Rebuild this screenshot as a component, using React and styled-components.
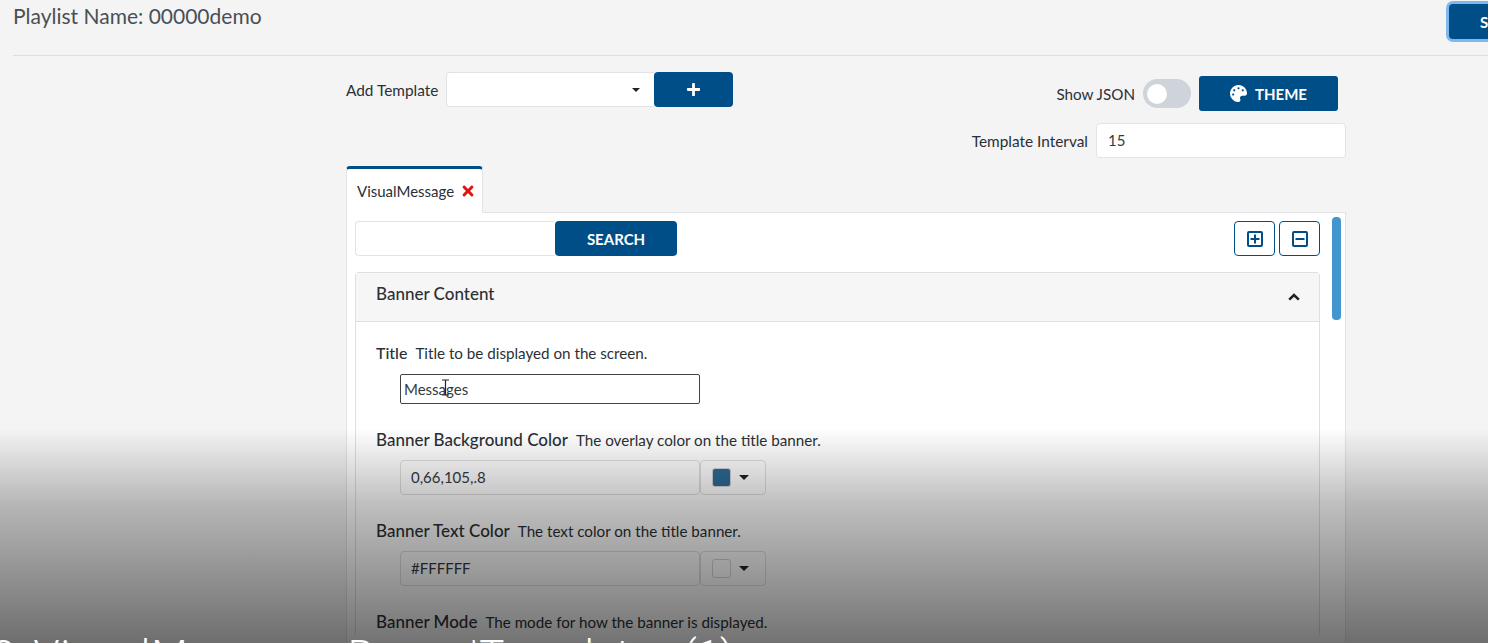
import styled, { createGlobalStyle } from "styled-components";
import { FaPalette, FaTimes, FaPlus } from "react-icons/fa";

const navy = "#004e87";

const GlobalStyle = createGlobalStyle`
  html, body {
    margin: 0;
    padding: 0;
    height: 100%;
    overflow: hidden;
    background: #f4f4f5;
  }
  body {
    font-family: "Lato", "Noto Sans", sans-serif;
    color: #212529;
  }
`;

const Page = styled.div`
  position: relative;
  width: 1488px;
  height: 643px;
  overflow: hidden;
  background: #f4f4f5;
`;

const TopBar = styled.div`
  display: flex;
  justify-content: space-between;
  align-items: flex-start;
  margin-left: 13px;
  height: 55px;
  border-bottom: 1px solid #dedede;
  box-sizing: content-box;
`;

const PlaylistName = styled.div`
  font-size: 21px;
  line-height: 24px;
  margin-top: 4px;
  color: #4a4f54;
`;

const SaveButton = styled.button`
  width: 60px;
  height: 35px;
  margin: 4px -21px 0 0;
  padding: 0 0 0 31px;
  text-align: left;
  border: none;
  border-radius: 4px;
  background: ${navy};
  color: #fff;
  font: 700 15px "Lato", sans-serif;
  box-shadow: 0 0 0 3px #7db8ee;
`;

const Content = styled.div`
  width: 1000px;
  margin-left: 346px;
`;

const ToolRow = styled.div`
  display: flex;
  justify-content: space-between;
  align-items: flex-start;
  padding-top: 16px;
  height: 51px;
  box-sizing: content-box;
`;

const Group = styled.div`
  display: flex;
  align-items: center;
`;

const Label = styled.span`
  font-size: ${(p) => p.$size || 15.4}px;
  color: #2b3035;
  margin-right: 8px;
`;

const SelectBox = styled.div`
  width: 193px;
  height: 33px;
  background: #fff;
  border: 1px solid #e1e3e6;
  border-right: none;
  border-radius: 4px 0 0 4px;
  display: flex;
  align-items: center;
  justify-content: flex-end;
  padding-right: 14px;
  box-sizing: content-box;
`;

const Caret = styled.span`
  width: 0;
  height: 0;
  border-left: ${(p) => p.$size || 4}px solid transparent;
  border-right: ${(p) => p.$size || 4}px solid transparent;
  border-top: ${(p) => p.$size || 4}px solid #222;
`;

const AddButton = styled.button`
  width: 79px;
  height: 35px;
  border: none;
  border-radius: 4px;
  background: ${navy};
  color: #fff;
  display: flex;
  align-items: center;
  justify-content: center;
  padding: 0;
`;

const RightTools = styled.div`
  display: flex;
  flex-direction: column;
  align-items: flex-end;
`;

const JsonRow = styled.div`
  display: flex;
  align-items: center;
  margin: 4px 8px 12px 0;
`;

const Toggle = styled.div`
  width: 48px;
  height: 29px;
  border-radius: 15px;
  background: #ced4da;
  display: flex;
  align-items: center;
  padding-left: 4px;
  box-sizing: border-box;
  margin-right: 8px;
  &::before {
    content: "";
    width: 20px;
    height: 20px;
    border-radius: 50%;
    background: #fff;
  }
`;

const ThemeButton = styled.button`
  width: 139px;
  height: 35px;
  border: none;
  border-radius: 3px;
  background: ${navy};
  color: #fff;
  font: 700 15px "Lato", sans-serif;
  display: flex;
  align-items: center;
  justify-content: center;
  gap: 8px;
  padding: 0;
`;

const IntervalRow = styled.div`
  display: flex;
  align-items: center;
`;

const IntervalInput = styled.div`
  width: 237px;
  height: 33px;
  padding-left: 11px;
  background: #fff;
  border: 1px solid #e1e3e6;
  border-radius: 4px;
  font-size: 15px;
  line-height: 33px;
  color: #343a40;
  box-sizing: content-box;
`;

const Tabs = styled.div`
  display: flex;
  margin-top: 43px;
`;

const Tab = styled.div`
  width: 137px;
  height: 47px;
  padding-left: 10px;
  background: #fff;
  border: 1px solid #e1e3e6;
  border-top: 3px solid ${navy};
  border-bottom: none;
  border-radius: 4px 4px 0 0;
  display: flex;
  align-items: center;
  gap: 6px;
  font-size: 15px;
  color: #2b3035;
  box-sizing: border-box;
  margin-bottom: -1px;
  position: relative;
  z-index: 1;
`;

const Panel = styled.div`
  position: relative;
  height: 460px;
  background: #fff;
  border: 1px solid #e1e3e6;
  padding: 8px 25px 0 8px;
  box-sizing: border-box;
`;

const ScrollThumb = styled.div`
  position: absolute;
  top: 4px;
  right: 4px;
  width: 9px;
  height: 103px;
  border-radius: 4px;
  background: #4196cf;
`;

const SearchRow = styled.div`
  display: flex;
  align-items: center;
  margin-bottom: 16px;
`;

const SearchInput = styled.div`
  width: 199px;
  height: 33px;
  background: #fff;
  border: 1px solid #e1e3e6;
  border-right: none;
  border-radius: 4px 0 0 4px;
  box-sizing: content-box;
`;

const SearchButton = styled.button`
  width: 122px;
  height: 35px;
  border: none;
  border-radius: 4px;
  background: ${navy};
  color: #fff;
  font: 700 15px "Lato", sans-serif;
  padding: 0;
`;

const IconButtons = styled.div`
  display: flex;
  gap: 4px;
  margin-left: auto;
`;

const IconButton = styled.button`
  width: 41px;
  height: 35px;
  border: 1px solid ${navy};
  border-radius: 4px;
  background: #fff;
  color: ${navy};
  display: flex;
  align-items: center;
  justify-content: center;
  padding: 0;
`;

const Accordion = styled.div`
  border: 1px solid #dfdfdf;
  border-bottom: none;
  border-radius: 4px 4px 0 0;
`;

const AccordionHead = styled.div`
  height: 49px;
  background: #f6f6f6;
  border-bottom: 1px solid #dfdfdf;
  display: flex;
  align-items: center;
  justify-content: space-between;
  padding: 0 19px 8px 20px;
  box-sizing: border-box;
  font-size: 17px;
  font-weight: 500;
  color: #2b3035;
`;

const Chevron = styled.svg`
  margin-top: 8px;
`;

const AccordionBody = styled.div`
  padding: 21px 20px 0;
`;

const Field = styled.div`
  margin-bottom: 25px;
`;

const FieldHead = styled.div`
  display: flex;
  align-items: baseline;
  gap: 8px;
  margin-bottom: 7px;
  height: 24px;
`;

const FieldName = styled.span`
  font-size: ${(p) => p.$size || 17}px;
  font-weight: 500;
  color: #2b3035;
`;

const FieldHelp = styled.span`
  font-size: 15.2px;
  color: #2b3035;
`;

const FocusInput = styled.div`
  width: 300px;
  height: 30px;
  margin-left: 24px;
  padding-left: 3px;
  background: #fff;
  border: 1px solid #444;
  border-radius: 2px;
  font-size: 15px;
  line-height: 28px;
  color: #343a40;
  box-sizing: border-box;
`;

const ColorRow = styled.div`
  display: flex;
  margin-left: 24px;
`;

const ColorInput = styled.div`
  width: 300px;
  height: 35px;
  padding-left: 10px;
  border: 1px solid #dfdfdf;
  border-radius: 4px;
  font-size: 15px;
  line-height: 33px;
  color: #343a40;
  box-sizing: border-box;
`;

const ColorPick = styled.div`
  width: 66px;
  height: 35px;
  border: 1px solid #dfdfdf;
  border-radius: 4px;
  display: flex;
  align-items: center;
  padding-left: 11px;
  gap: 8px;
  box-sizing: border-box;
`;

const Swatch = styled.span`
  width: 19px;
  height: 19px;
  border-radius: 3px;
  background: ${(p) => p.$color};
  border: 1px solid #d5d5d5;
  box-sizing: border-box;
`;

const Shade = styled.div`
  position: absolute;
  left: 0;
  right: 0;
  bottom: 0;
  height: 215px;
  background: linear-gradient(to bottom, rgba(0, 0, 0, 0), rgba(0, 0, 0, 0.25) 35%, rgba(0, 0, 0, 0.55));
  pointer-events: none;
`;

const Caption = styled.div`
  position: absolute;
  left: -8px;
  top: 632px;
  white-space: nowrap;
  color: #fff;
  font-size: 42px;
  line-height: 48px;
  font-family: "Roboto", sans-serif;
  font-weight: 300;
  pointer-events: none;
`;

const CaptionWord = styled.span`
  margin-left: ${(p) => p.$left || 0}px;
  letter-spacing: ${(p) => p.$spacing || 0}px;
`;

const CaptionBar = styled.span`
  margin: 0 1px 0 -12px;
`;

const TextCursor = styled.svg`
  position: absolute;
  left: 441px;
  top: 379px;
`;

const fields = [
  { name: "Banner Background Color", help: "The overlay color on the title banner.", value: "0,66,105,.8", color: "#2e6a96" },
  { name: "Banner Text Color", help: "The text color on the title banner.", value: "#FFFFFF", color: "transparent" },
];

function SquareIcon({ plus }) {
  return (
    <svg width="16" height="16" viewBox="0 0 16 16" fill="none" stroke="currentColor">
      <rect x="1" y="1" width="14" height="14" rx="1" strokeWidth="2" />
      <path d={plus ? "M3.5 8h9M8 3.5v9" : "M3.5 8h9"} strokeWidth="2" />
    </svg>
  );
}

export default function App() {
  return (
    <Page>
      <GlobalStyle />
      <TopBar>
        <PlaylistName>Playlist Name: 00000demo</PlaylistName>
        <SaveButton>S</SaveButton>
      </TopBar>
      <Content>
        <ToolRow>
          <Group>
            <Label>Add Template</Label>
            <SelectBox><Caret /></SelectBox>
            <AddButton><FaPlus size={15} /></AddButton>
          </Group>
          <RightTools>
            <JsonRow>
              <Label $size={15.2}>Show JSON</Label>
              <Toggle />
              <ThemeButton><FaPalette size={17} />THEME</ThemeButton>
            </JsonRow>
            <IntervalRow>
              <Label>Template Interval</Label>
              <IntervalInput>15</IntervalInput>
            </IntervalRow>
          </RightTools>
        </ToolRow>
        <Tabs>
          <Tab>VisualMessage <FaTimes size={16} color="#e0140c" /></Tab>
        </Tabs>
        <Panel>
          <ScrollThumb />
          <SearchRow>
            <SearchInput />
            <SearchButton>SEARCH</SearchButton>
            <IconButtons>
              <IconButton><SquareIcon plus /></IconButton>
              <IconButton><SquareIcon /></IconButton>
            </IconButtons>
          </SearchRow>
          <Accordion>
            <AccordionHead>
              Banner Content
              <Chevron width="12" height="8" viewBox="0 0 12 8" fill="none" stroke="#222" strokeWidth="2.6">
                <path d="M1.2 6.6 6 2l4.8 4.6" />
              </Chevron>
            </AccordionHead>
            <AccordionBody>
              <Field>
                <FieldHead>
                  <FieldName $size={16}>Title</FieldName>
                  <FieldHelp>Title to be displayed on the screen.</FieldHelp>
                </FieldHead>
                <FocusInput>Messages</FocusInput>
              </Field>
              {fields.map((f) => (
                <Field key={f.name}>
                  <FieldHead>
                    <FieldName>{f.name}</FieldName>
                    <FieldHelp>{f.help}</FieldHelp>
                  </FieldHead>
                  <ColorRow>
                    <ColorInput>{f.value}</ColorInput>
                    <ColorPick><Swatch $color={f.color} /><Caret $size={5} /></ColorPick>
                  </ColorRow>
                </Field>
              ))}
              <Field>
                <FieldHead>
                  <FieldName>Banner Mode</FieldName>
                  <FieldHelp>The mode for how the banner is displayed.</FieldHelp>
                </FieldHead>
              </Field>
            </AccordionBody>
          </Accordion>
        </Panel>
      </Content>
      <TextCursor width="9" height="17" viewBox="0 0 9 17">
        <path d="M1 1h7M4.5 1v15M1 16h7" stroke="#222" strokeWidth="1.2" fill="none" />
      </TextCursor>
      <Shade />
      <Caption>
        2 <CaptionWord $left={8} $spacing={1}>VisualMessage</CaptionWord>{" "}
        <CaptionWord $left={11} $spacing={0.5}>Banner</CaptionWord>
        <CaptionBar>|</CaptionBar>Templates (1)
      </Caption>
    </Page>
  );
}
